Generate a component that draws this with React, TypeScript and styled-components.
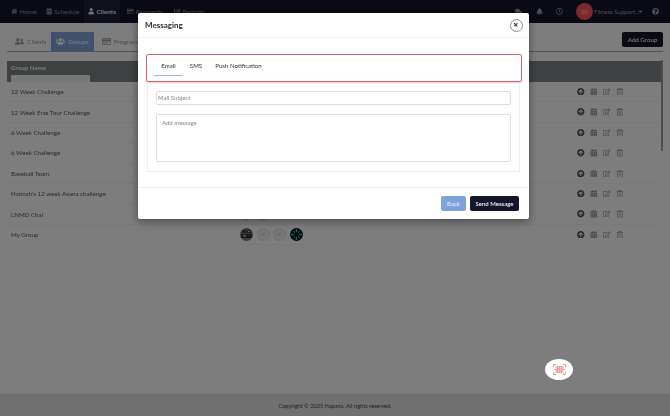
import React from "react";
import styled, { createGlobalStyle } from "styled-components";
import {
  FaHome, FaCalendarAlt, FaUser, FaRegCreditCard, FaChartBar, FaComments, FaBell, FaRegClock,
  FaQuestionCircle, FaUserFriends, FaUsers, FaArrowCircleUp, FaRegEdit, FaRegTrashAlt, FaCaretDown, FaTimes,
} from "react-icons/fa";

const Global = createGlobalStyle`
  html, body { margin: 0; padding: 0; width: 670px; height: 416px; overflow: hidden; background: #fafafa; }
  body { font-family: Lato, "Noto Sans", sans-serif; color: #333; }
  * { box-sizing: border-box; }
`;

const Page = styled.div`
  position: relative;
  width: 670px;
  height: 416px;
  display: flex;
  flex-direction: column;
  overflow: hidden;
  filter: blur(0.35px);
`;

const Nav = styled.header`
  height: 23px;
  flex: none;
  background: #14152b;
  display: flex;
  align-items: stretch;
  padding: 0 11.5px 0 7px;
  color: #b6b6be;
  font-size: 6.4px;
`;

const NavItem = styled.div<{ $active?: boolean; $width: number }>`
  width: ${p => p.$width}px;
  display: flex;
  align-items: center;
  justify-content: center;
  gap: 2px;
  background: ${p => (p.$active ? "#1d2136" : "transparent")};
  color: ${p => (p.$active ? "#e4e4e8" : "#8d8d99")};
  font-weight: ${p => (p.$active ? 700 : 400)};
`;

const NavRight = styled.div`
  margin-left: auto;
  display: flex;
  align-items: center;
  color: #9a9aa5;
  font-size: 6px;
`;

const NavIcon = styled.span<{ $gap: number }>`
  display: flex;
  margin-right: ${p => p.$gap}px;
  font-size: 7px;
`;

const Avatar = styled.div`
  width: 17px;
  height: 17px;
  border-radius: 50%;
  background: #ff5058;
  color: #f3c5c7;
  font-size: 6px;
  display: flex;
  align-items: center;
  justify-content: center;
  margin-right: 1px;
`;

const UserName = styled.span`
  width: 42.5px;
  white-space: nowrap;
`;

const Content = styled.main`
  flex: 1;
  padding: 9px 7px 0;
  display: flex;
  flex-direction: column;
`;

const TabBar = styled.div`
  display: flex;
  align-items: flex-start;
  height: 20px;
  border-bottom: 1px solid #aaa;
`;

const PageTab = styled.div<{ $active?: boolean; $width: number; $left: number }>`
  width: ${p => p.$width}px;
  margin-left: ${p => p.$left}px;
  height: 19px;
  display: flex;
  align-items: center;
  justify-content: center;
  gap: 3px;
  font-size: 6.4px;
  background: ${p => (p.$active ? "#7ea3db" : "transparent")};
  color: ${p => (p.$active ? "#fff" : "#a0a0a0")};
  svg { font-size: 9px; }
`;

const AddGroup = styled.button`
  margin-left: auto;
  width: 41px;
  height: 15px;
  border: 0;
  border-radius: 2px;
  background: #14152b;
  color: #f2f2f2;
  font: 500 6.2px Lato, sans-serif;
  padding: 0;
`;

const Table = styled.section`
  margin-top: 9px;
  width: 654px;
`;

const HeadRow = styled.div`
  height: 21px;
  background: #7f8487;
  color: #f5f5f5;
  font-size: 6.2px;
  font-weight: 700;
  padding: 3px 4px 0;
  display: flex;
  flex-direction: column;
  justify-content: space-between;
`;

const HeadFilter = styled.div`
  width: 79px;
  height: 7px;
  background: #f0f0f0;
  border-radius: 1px 1px 0 0;
`;

const Row = styled.div`
  height: 20.4px;
  display: flex;
  align-items: center;
  padding: 0 4px;
  font-size: 6.2px;
  color: #555;
  border-bottom: 1px solid #f3f3f3;
`;

const RowName = styled.span`
  width: 229px;
  flex: none;
`;

const Members = styled.div`
  display: flex;
  gap: 3.5px;
  width: 337px;
  flex: none;
`;

const Actions = styled.div`
  display: flex;
  gap: 5.5px;
  color: #9a9a9a;
  font-size: 7.5px;
  svg:first-child { color: #555; }
`;

const Scroll = styled.div`
  position: absolute;
  left: 661px;
  top: 60px;
  width: 2px;
  height: 91px;
  background: #999;
`;

const Footer = styled.footer`
  height: 22px;
  display: flex;
  align-items: center;
  justify-content: center;
  font-size: 5.6px;
  color: #444;
  background: #e0e0e0;
`;

const Backdrop = styled.div`
  position: absolute;
  inset: 0;
  background: rgba(0, 0, 0, 0.5);
  padding: 13px 0 0 138px;
`;

const Modal = styled.div`
  width: 391px;
  height: 206px;
  background: #fff;
  border-radius: 2px;
  box-shadow: 0 2px 8px rgba(0, 0, 0, 0.45);
  display: flex;
  flex-direction: column;
`;

const ModalHead = styled.div`
  height: 25px;
  flex: none;
  border-bottom: 1px solid #f0f0f0;
  display: flex;
  align-items: center;
  justify-content: space-between;
  padding: 0 6.5px 0 7px;
  color: #2c2c2c;
  font-size: 8px;
  font-weight: 700;
`;

const Close = styled.div`
  width: 13px;
  height: 13px;
  border: 1px solid #8f8f8f;
  border-radius: 50%;
  display: flex;
  align-items: center;
  justify-content: center;
  font-size: 5.5px;
  color: #333;
`;

const ModalBody = styled.div`
  flex: 1;
  padding: 16px 7px 0 8px;
`;

const Highlight = styled.div`
  width: 376px;
  height: 28px;
  border: 1px solid #e4606f;
  border-radius: 2px;
  box-shadow: 0 1px 1px rgba(228, 96, 111, 0.35);
  display: flex;
  padding: 0 0 0 7px;
  background: #fff;
`;

const MsgTab = styled.div<{ $active?: boolean; $width: number }>`
  width: ${p => p.$width}px;
  height: 21px;
  display: flex;
  align-items: center;
  justify-content: center;
  padding-top: 1px;
  font-size: 6.1px;
  color: #333;
  border-bottom: 1px solid ${p => (p.$active ? "#9db6d6" : "transparent")};
`;

const Card = styled.div`
  width: 373px;
  height: 90px;
  margin-left: 1px;
  border: 1px solid #eee;
  border-top: 0;
  padding: 9px 8px;
  display: flex;
  flex-direction: column;
  gap: 9px;
`;

const Subject = styled.div`
  height: 14px;
  border: 1px solid #ddd;
  border-radius: 2px;
  display: flex;
  align-items: center;
  padding-left: 1px;
  font-size: 6px;
  color: #888;
`;

const Message = styled.div`
  height: 49px;
  border: 1px solid #ddd;
  border-radius: 2px;
  padding: 4px 5px;
  font-size: 6px;
  color: #888;
`;

const ModalFoot = styled.div`
  height: 32px;
  flex: none;
  border-top: 1px solid #f0f0f0;
  display: flex;
  align-items: center;
  justify-content: flex-end;
  gap: 4px;
  padding: 0 10px 0 0;
`;

const Btn = styled.button<{ $dark?: boolean; $width: number }>`
  width: ${p => p.$width}px;
  height: 15px;
  border: 0;
  border-radius: 2px;
  padding: 0;
  background: ${p => (p.$dark ? "#14152b" : "#7ea3db")};
  color: ${p => (p.$dark ? "#fff" : "#e6eefa")};
  font: 500 6px Lato, sans-serif;
`;

const FloatButton = styled.div`
  position: absolute;
  left: 545px;
  top: 359px;
  width: 28px;
  height: 21px;
  border-radius: 50%;
  background: #fff;
  display: flex;
  align-items: center;
  justify-content: center;
`;

const Photo = () => (
  <svg width="13" height="13" viewBox="0 0 13 13">
    <circle cx="6.5" cy="6.5" r="6.5" fill="#777" />
    <rect x="2" y="2" width="9" height="3" fill="#444" />
    <rect x="1" y="6" width="11" height="4" fill="#333" />
    <rect x="3" y="7" width="3" height="1.5" fill="#aaa" />
    <rect x="8" y="3" width="2" height="1" fill="#bbb" />
  </svg>
);

const Placeholder = () => (
  <svg width="13" height="13" viewBox="0 0 13 13">
    <circle cx="6.5" cy="6.5" r="6" fill="#eee" stroke="#ddd" />
    <rect x="5" y="5" width="3" height="3" rx="0.6" fill="#ddd" />
  </svg>
);

const Spinner = () => (
  <svg width="13" height="13" viewBox="0 0 13 13">
    <circle cx="6.5" cy="6.5" r="6.5" fill="#0d1a1a" />
    <g stroke="#1cc9a5" strokeWidth="1.5">
      <path d="M6.5 1v3M6.5 9v3M1 6.5h3M9 6.5h3" />
      <path d="M3 3l2 2M10 3L8 5M3 10l2-2M10 10L8 8" strokeWidth="0.8" />
    </g>
  </svg>
);

const ScanIcon = () => (
  <svg width="13" height="11" viewBox="0 0 13 11" fill="none">
    <path d="M.5 3V.5H3M10 .5h2.5V3M.5 8v2.5H3M10 10.5h2.5V8" stroke="#f0958a" strokeWidth="1" />
    <rect x="2.5" y="2" width="8" height="7" fill="#f8bdb5" />
    <path d="M4.5 2v7M6.5 2v7M8.5 2v7" stroke="#f0958a" strokeWidth="0.8" />
    <path d="M1 5.5h11" stroke="#f0958a" strokeWidth="0.6" />
  </svg>
);

const groups: { name: string; members?: React.ReactNode }[] = [
  { name: "12 Week Challenge" },
  { name: "12 Week Eras Tour Challenge" },
  { name: "6 Week Challenge" },
  { name: "6 Week Challenge" },
  { name: "Baseball Team" },
  { name: "Hannah's 12 week Asana challenge" },
  { name: "LNMD Chal", members: <><Placeholder /><Placeholder /></> },
  { name: "My Group", members: <><Photo /><Placeholder /><Placeholder /><Spinner /></> },
];

export default function App() {
  return (
    <Page>
      <Global />
      <Nav>
        <NavItem $width={34}><FaHome />Home</NavItem>
        <NavItem $width={43}><FaCalendarAlt />Schedule</NavItem>
        <NavItem $width={36} $active><FaUser />Clients</NavItem>
        <NavItem $width={50}><FaRegCreditCard />Payments</NavItem>
        <NavItem $width={38}><FaChartBar />Reports</NavItem>
        <NavRight>
          <NavIcon $gap={14}><FaComments /></NavIcon>
          <NavIcon $gap={13}><FaBell /></NavIcon>
          <NavIcon $gap={13.5}><FaRegClock /></NavIcon>
          <Avatar>SV</Avatar>
          <UserName>Fitness Support...</UserName>
          <NavIcon $gap={8}><FaCaretDown /></NavIcon>
          <NavIcon $gap={0}><FaQuestionCircle /></NavIcon>
        </NavRight>
      </Nav>
      <Content>
        <TabBar>
          <PageTab $width={38} $left={5}><FaUserFriends />Clients</PageTab>
          <PageTab $width={43} $left={1} $active><FaUsers />Groups</PageTab>
          <PageTab $width={44} $left={5}><FaRegCreditCard />Programs</PageTab>
          <AddGroup>Add Group</AddGroup>
        </TabBar>
        <Table>
          <HeadRow>
            Group Name
            <HeadFilter />
          </HeadRow>
          {groups.map((g, i) => (
            <Row key={i}>
              <RowName>{g.name}</RowName>
              <Members>{g.members}</Members>
              <Actions>
                <FaArrowCircleUp />
                <FaCalendarAlt />
                <FaRegEdit />
                <FaRegTrashAlt />
              </Actions>
            </Row>
          ))}
        </Table>
        <Scroll />
      </Content>
      <Footer>Copyright © 2025 Hapana. All rights reserved.</Footer>
      <Backdrop>
        <Modal>
          <ModalHead>
            Messaging
            <Close><FaTimes /></Close>
          </ModalHead>
          <ModalBody>
            <Highlight>
              <MsgTab $width={29} $active>Email</MsgTab>
              <MsgTab $width={26}>SMS</MsgTab>
              <MsgTab $width={59}>Push Notification</MsgTab>
            </Highlight>
            <Card>
              <Subject>Mail Subject</Subject>
              <Message>Add message</Message>
            </Card>
          </ModalBody>
          <ModalFoot>
            <Btn $width={25}>Back</Btn>
            <Btn $width={49} $dark>Send Message</Btn>
          </ModalFoot>
        </Modal>
      </Backdrop>
      <FloatButton><ScanIcon /></FloatButton>
    </Page>
  );
}
